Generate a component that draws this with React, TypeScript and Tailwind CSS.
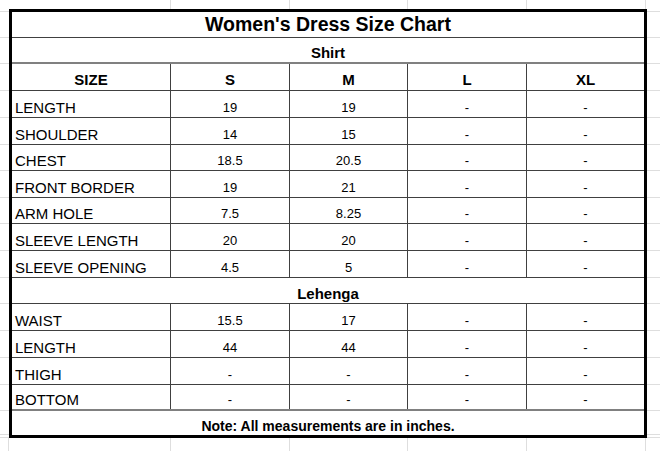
import React from "react";

const GRID = "border-[#dedede]";

type DataRow = { label: string; s: string; m: string; l: string; xl: string; h: string };

const shirt: DataRow[] = [
  { label: "LENGTH", s: "19", m: "19", l: "-", xl: "-", h: "h-[27px]" },
  { label: "SHOULDER", s: "14", m: "15", l: "-", xl: "-", h: "h-[27px]" },
  { label: "CHEST", s: "18.5", m: "20.5", l: "-", xl: "-", h: "h-[26px]" },
  { label: "FRONT BORDER", s: "19", m: "21", l: "-", xl: "-", h: "h-[27px]" },
  { label: "ARM HOLE", s: "7.5", m: "8.25", l: "-", xl: "-", h: "h-[26px]" },
  { label: "SLEEVE LENGTH", s: "20", m: "20", l: "-", xl: "-", h: "h-[27px]" },
  { label: "SLEEVE OPENING", s: "4.5", m: "5", l: "-", xl: "-", h: "h-[27px]" },
];

const lehenga: DataRow[] = [
  { label: "WAIST", s: "15.5", m: "17", l: "-", xl: "-", h: "h-[27px]" },
  { label: "LENGTH", s: "44", m: "44", l: "-", xl: "-", h: "h-[27px]" },
  { label: "THIGH", s: "-", m: "-", l: "-", xl: "-", h: "h-[27px]" },
  { label: "BOTTOM", s: "-", m: "-", l: "-", xl: "-", h: "h-[26px]" },
];

// heights of the sheet rows alongside the table (for outside gridlines)
const sideRows = [
  "h-[3px]",
  "h-[26px]",
  "h-[26px]",
  "h-[27px]",
  "h-[27px]",
  "h-[27px]",
  "h-[26px]",
  "h-[27px]",
  "h-[26px]",
  "h-[27px]",
  "h-[27px]",
  "h-[26px]",
  "h-[27px]",
  "h-[27px]",
  "h-[27px]",
  "h-[26px]",
  "h-[24px]",
  "h-[3px]",
];

function SideStrip({ className }: { className: string }) {
  return (
    <div className={`flex flex-col ${className}`}>
      {sideRows.map((h, i) => (
        <div key={i} className={`${h} shrink-0 border-b ${GRID}`} />
      ))}
    </div>
  );
}

function Row({ r, last }: { r: DataRow; last?: boolean }) {
  const border = last ? "border-b-2 border-[#808080]" : "border-b border-[#404040]";
  const val = "flex items-end justify-center pb-[2px] text-[13px] leading-[15px] border-r border-[#404040]";
  return (
    <div className={`flex shrink-0 ${r.h} ${border}`}>
      <div className="w-[159px] flex items-end pl-[3px] pb-[1px] text-[15px] leading-[17px] border-r border-[#404040]">
        {r.label}
      </div>
      <div className={`w-[119px] ${val}`}>{r.s}</div>
      <div className={`w-[118px] ${val}`}>{r.m}</div>
      <div className={`w-[119px] ${val}`}>{r.l}</div>
      <div className="flex-1 flex items-end justify-center pb-[2px] text-[13px] leading-[15px]">{r.xl}</div>
    </div>
  );
}

export default function App() {
  const head = "flex items-end justify-center pb-[2px] text-[15px] leading-[17px] font-bold";
  return (
    <div className="w-[660px] h-[451px] bg-white overflow-hidden flex flex-col text-black font-['Liberation_Sans',Arial,sans-serif]">
      {/* top sheet strip */}
      <div className="flex h-[9px] shrink-0">
        <div className={`w-[171px] border-r ${GRID}`} />
        <div className={`w-[119px] border-r ${GRID}`} />
        <div className={`w-[118px] border-r ${GRID}`} />
        <div className={`w-[119px] border-r ${GRID}`} />
        <div className={`w-[119px] border-r ${GRID}`} />
        <div className="flex-1" />
      </div>

      {/* middle: side strips + table */}
      <div className="flex h-[429px] shrink-0">
        <SideStrip className="w-[9px]" />
        <div className="w-[638px] border-[3px] border-black flex flex-col">
          <div className="h-[26px] shrink-0 border-b border-[#404040] flex items-end justify-center pb-[2px] text-[19.5px] leading-[22px] font-bold">
            Women's Dress Size Chart
          </div>
          <div className="h-[26px] shrink-0 border-b-2 border-[#808080] flex items-end justify-center pb-[1px] text-[15px] leading-[17px] font-bold">
            Shirt
          </div>
          <div className="flex h-[27px] shrink-0 border-b border-[#404040]">
            <div className={`w-[159px] border-r border-[#404040] ${head}`}>SIZE</div>
            <div className={`w-[119px] border-r border-[#404040] ${head}`}>S</div>
            <div className={`w-[118px] border-r border-[#404040] ${head}`}>M</div>
            <div className={`w-[119px] border-r border-[#404040] ${head}`}>L</div>
            <div className={`flex-1 ${head}`}>XL</div>
          </div>
          {shirt.map((r) => (
            <Row key={"s" + r.label} r={r} />
          ))}
          <div className="h-[26px] shrink-0 border-b border-[#404040] flex items-end justify-center pb-[1px] text-[15px] leading-[17px] font-bold">
            Lehenga
          </div>
          {lehenga.map((r, i) => (
            <Row key={"l" + r.label} r={r} last={i === lehenga.length - 1} />
          ))}
          <div className="flex-1 flex items-end justify-center pb-[1px] text-[14px] leading-[16px] font-bold">
            Note: All measurements are in inches.
          </div>
        </div>
        <SideStrip className="flex-1" />
      </div>

      {/* bottom sheet strip */}
      <div className="flex flex-1">
        <div className={`w-[9px] border-r ${GRID}`} />
        <div className={`w-[162px] border-r ${GRID}`} />
        <div className={`w-[119px] border-r ${GRID}`} />
        <div className={`w-[118px] border-r ${GRID}`} />
        <div className={`w-[119px] border-r ${GRID}`} />
        <div className={`w-[119px] border-r ${GRID}`} />
        <div className="flex-1" />
      </div>
    </div>
  );
}
